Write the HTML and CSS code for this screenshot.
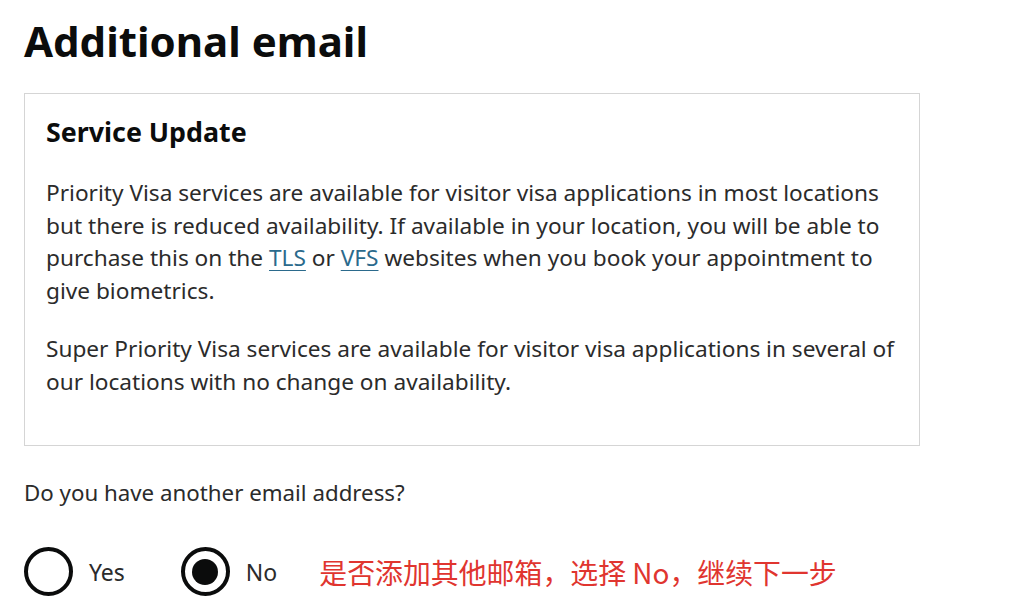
FILE: index.html
```html
<!DOCTYPE html>
<html lang="en">
<head>
    <meta charset="UTF-8">
    <title>Additional email</title>
    <link rel="stylesheet" href="styles.css">
</head>
<body>
    <div class="page">
        <h1 class="title">Additional email</h1>

        <div class="notice">
            <h2>Service Update</h2>
            <p>Priority Visa services are available for visitor visa applications in most locations but there is reduced availability. If available in your location, you will be able to purchase this on the <a href="#">TLS</a> or <a href="#">VFS</a> websites when you book your appointment to give biometrics.</p>
            <p>Super Priority Visa services are available for visitor visa applications in several of our locations with no change on availability.</p>
        </div>

        <fieldset class="question">
            <legend>Do you have another email address?</legend>
            <div class="radios">
                <label class="radio">
                    <input type="radio" name="another" value="yes">
                    <span class="mark"></span>
                    <span class="radio-label">Yes</span>
                </label>
                <label class="radio">
                    <input type="radio" name="another" value="no" checked>
                    <span class="mark"></span>
                    <span class="radio-label">No</span>
                </label>
                <span class="hint">是否添加其他邮箱，选择 No，继续下一步</span>
            </div>
        </fieldset>
    </div>
</body>
</html>
```

FILE: styles.css
```css
body {
    margin: 0;
    background-color: #ffffff;
    color: #0b0c0c;
    font-family: 'Noto Sans', sans-serif;
}

.page {
    padding: 12px 24px 0 24px;
    width: 896px;
}

.title {
    font-size: 42px;
    font-weight: 700;
    line-height: 58px;
    margin: 0 0 23px 0;
}

.notice {
    border: 1px solid #d5d5d5;
    padding: 20px 10px 47px 21px;
    margin-bottom: 32px;
}

.notice h2 {
    font-size: 26.8px;
    font-weight: 700;
    line-height: 36px;
    margin: 0 0 27px 0;
}

.notice p {
    font-size: 22.65px;
    line-height: 32.5px;
    margin: 0 0 26px 0;
    color: #2b2b2b;
}

.notice p:last-child {
    margin-bottom: 0;
}

.notice a {
    color: #2b6a8c;
    text-decoration: underline;
    text-decoration-thickness: 1px;
    text-underline-offset: 4px;
}

.question {
    border: none;
    margin: 0;
    padding: 0;
}

.question legend {
    padding: 0;
    font-size: 22.3px;
    line-height: 30px;
    color: #2b2b2b;
    margin-bottom: 39px;
}

.radios {
    display: flex;
    align-items: center;
}

.radio {
    display: flex;
    align-items: center;
    margin-right: 56px;
    cursor: pointer;
}

.radio:last-of-type {
    margin-right: 42px;
}

.radio input {
    display: none;
}

.mark {
    width: 41px;
    height: 41px;
    border: 4px solid #0b0c0c;
    border-radius: 50%;
    display: flex;
    align-items: center;
    justify-content: center;
}

.radio input:checked + .mark::after {
    content: '';
    width: 26px;
    height: 26px;
    border-radius: 50%;
    background-color: #0b0c0c;
}

.radio-label {
    font-size: 23px;
    color: #2b2b2b;
    margin-left: 16px;
}

.hint {
    font-family: 'Noto Sans CJK SC', sans-serif;
    font-size: 27.9px;
    color: #e0352f;
}
```
